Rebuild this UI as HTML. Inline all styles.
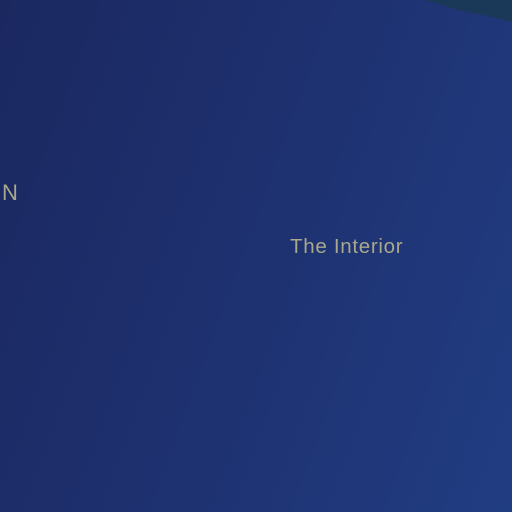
<!DOCTYPE html>
<html><head><style>
html,body{margin:0;padding:0}
body{width:512px;height:512px;overflow:hidden;position:relative;background:linear-gradient(110deg,#1b2860 0%,#1e3170 50%,#213d82 100%);font-family:"Liberation Sans",sans-serif}
.t{position:absolute;color:#a9a78c;white-space:nowrap}
</style></head><body>
<svg width="512" height="512" style="position:absolute;left:0;top:0">
<polygon points="425,0 512,0 512,22 488,16 458,10" fill="#1a3858"/>
</svg>
<div class="t" style="left:2px;top:180px;font-size:22px">N</div>
<div class="t" style="left:290px;top:235px;font-size:20.5px;letter-spacing:0.7px">The Interior</div>
</body></html>
